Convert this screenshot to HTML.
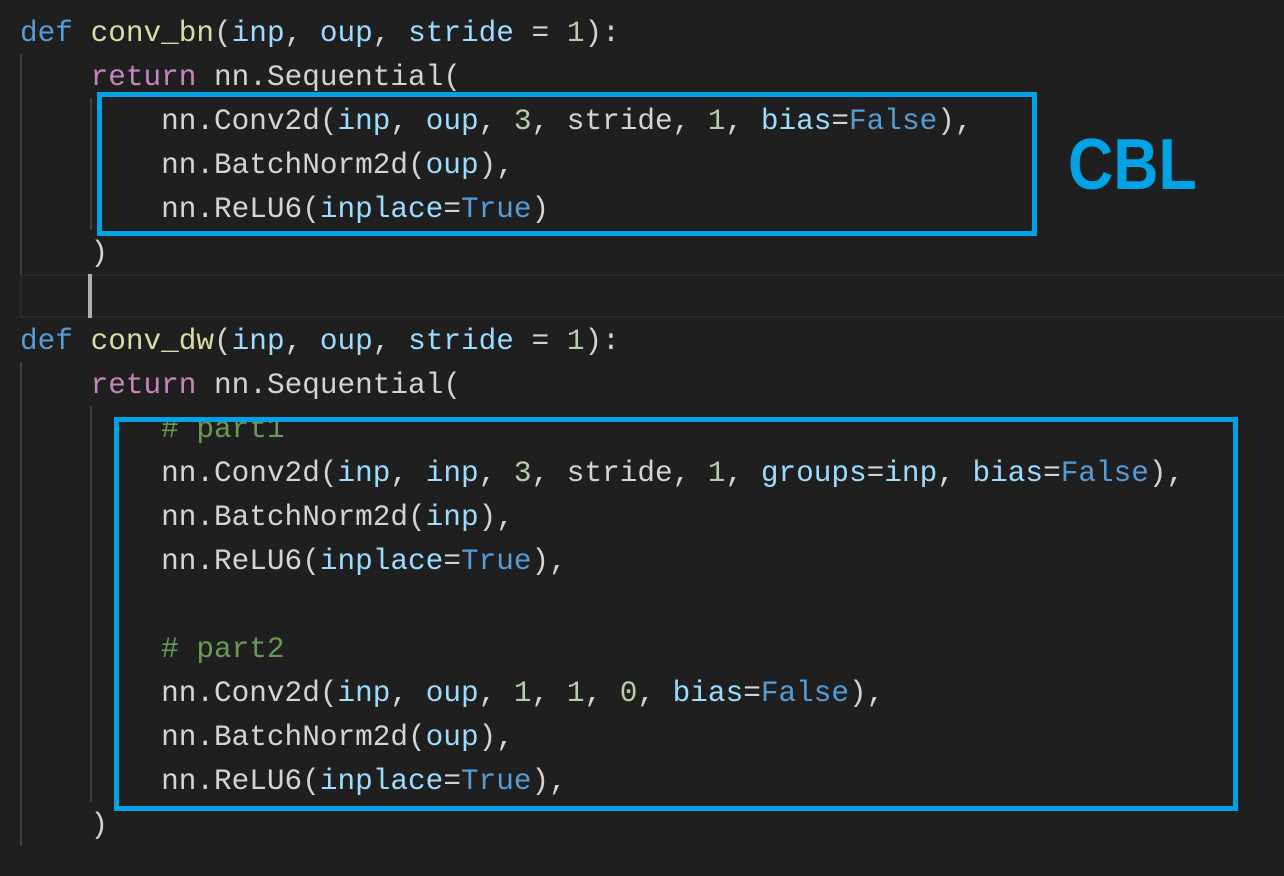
<!DOCTYPE html>
<html><head><style>
body{margin:0;width:1284px;height:876px;background:#1f1f1f;overflow:hidden;position:relative;font-family:"Liberation Mono",monospace;}
.l{position:absolute;left:20px;height:44px;line-height:48px;font-size:29.4px;white-space:pre;color:#d4d4d4;}
.k{color:#569cd6}.f{color:#dcdcaa}.p{color:#9cdcfe}.n{color:#b5cea8}.r{color:#c586c0}.c{color:#6a9955}.b{color:#569cd6}
.g{position:absolute;width:2px;background:#404040}
.box{position:absolute;border:5px solid #02a3e6;}
</style></head><body>
<div style="position:absolute;left:20px;top:274px;width:1264px;height:40px;border:2px solid #2a2a2a;border-right:none"></div>
<div style="position:absolute;left:88px;top:274px;width:4px;height:44px;background:#aeafad"></div>
<div class="g" style="left:20px;top:54px;height:220px"></div>
<div class="g" style="left:90px;top:98px;height:132px"></div>
<div class="g" style="left:20px;top:362px;height:484px"></div>
<div class="g" style="left:90px;top:406px;height:396px"></div>

<div class="l" style="top:10px"><span class="k">def</span> <span class="f">conv_bn</span>(<span class="p">inp</span>, <span class="p">oup</span>, <span class="p">stride</span> = <span class="n">1</span>):</div>
<div class="l" style="top:54px">    <span class="r">return</span> nn.Sequential(</div>
<div class="l" style="top:98px">        nn.Conv2d(<span class="p">inp</span>, <span class="p">oup</span>, <span class="n">3</span>, stride, <span class="n">1</span>, <span class="p">bias</span>=<span class="b">False</span>),</div>
<div class="l" style="top:142px">        nn.BatchNorm2d(<span class="p">oup</span>),</div>
<div class="l" style="top:186px">        nn.ReLU6(<span class="p">inplace</span>=<span class="b">True</span>)</div>
<div class="l" style="top:230px">    )</div>
<div class="l" style="top:318px"><span class="k">def</span> <span class="f">conv_dw</span>(<span class="p">inp</span>, <span class="p">oup</span>, <span class="p">stride</span> = <span class="n">1</span>):</div>
<div class="l" style="top:362px">    <span class="r">return</span> nn.Sequential(</div>
<div class="l" style="top:406px">        <span class="c"># part1</span></div>
<div class="l" style="top:450px">        nn.Conv2d(<span class="p">inp</span>, <span class="p">inp</span>, <span class="n">3</span>, stride, <span class="n">1</span>, <span class="p">groups</span>=<span class="p">inp</span>, <span class="p">bias</span>=<span class="b">False</span>),</div>
<div class="l" style="top:494px">        nn.BatchNorm2d(<span class="p">inp</span>),</div>
<div class="l" style="top:538px">        nn.ReLU6(<span class="p">inplace</span>=<span class="b">True</span>),</div>
<div class="l" style="top:626px">        <span class="c"># part2</span></div>
<div class="l" style="top:670px">        nn.Conv2d(<span class="p">inp</span>, <span class="p">oup</span>, <span class="n">1</span>, <span class="n">1</span>, <span class="n">0</span>, <span class="p">bias</span>=<span class="b">False</span>),</div>
<div class="l" style="top:714px">        nn.BatchNorm2d(<span class="p">oup</span>),</div>
<div class="l" style="top:758px">        nn.ReLU6(<span class="p">inplace</span>=<span class="b">True</span>),</div>
<div class="l" style="top:802px">    )</div>

<div class="box" style="left:97px;top:92px;width:930px;height:134px"></div>
<div class="box" style="left:114px;top:417px;width:1114px;height:384px"></div>
<div style="position:absolute;left:1068px;top:125px;font-family:'Liberation Sans',sans-serif;font-weight:bold;font-size:72px;line-height:80px;color:#02a3e6;transform:scaleX(0.87);transform-origin:left top">CBL</div>
</body></html>
